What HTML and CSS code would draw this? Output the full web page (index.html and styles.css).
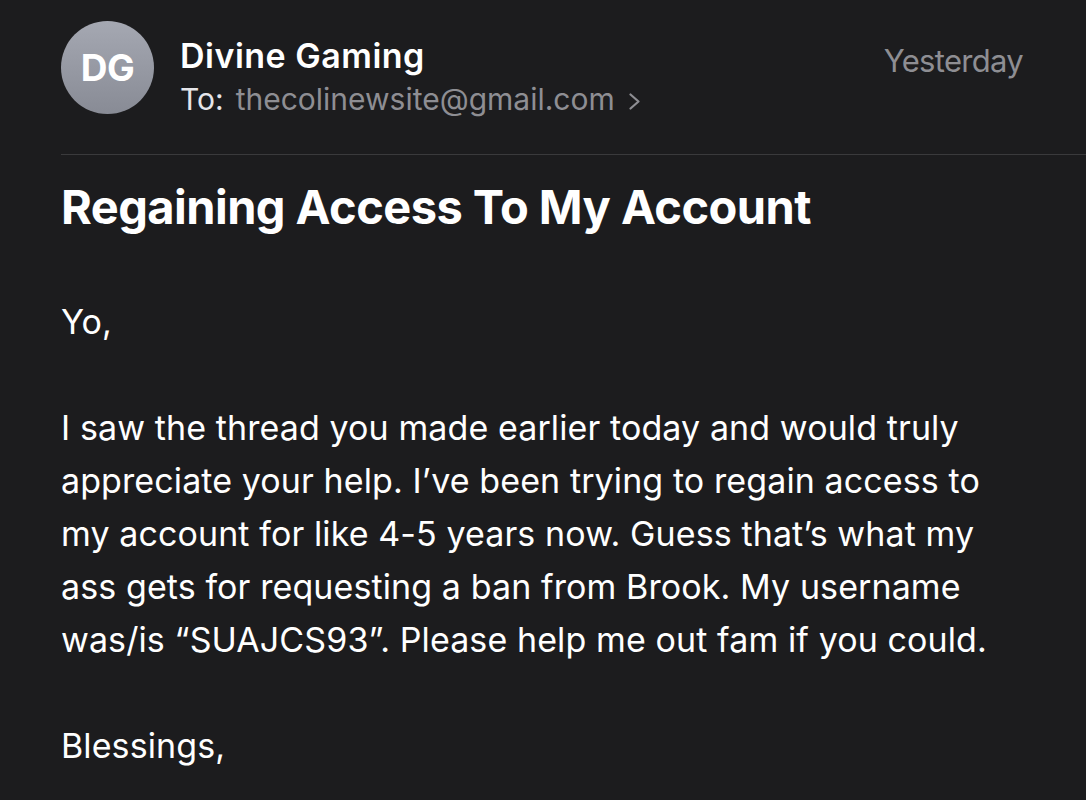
FILE: index.html
```html
<!DOCTYPE html>
<html>
<head>
<meta charset="utf-8">
<link rel="stylesheet" href="styles.css">
</head>
<body>
<div class="mail">
  <header class="head">
    <div class="avatar">DG</div>
    <div class="meta">
      <div class="name">Divine Gaming</div>
      <div class="to"><span class="to-label">To:</span><span class="addr">thecolinewsite@gmail.com</span>
        <svg class="chev" width="12" height="17" viewBox="0 0 12 17"><path d="M1.5 1.5 L9.5 8.5 L1.5 15.5" fill="none" stroke="#8e8e93" stroke-width="2.2" stroke-linecap="round" stroke-linejoin="round"/></svg>
      </div>
    </div>
    <div class="date">Yesterday</div>
  </header>
  <div class="sep"></div>
  <h1 class="subject">Regaining Access To My Account</h1>
  <div class="body">
    <p>Yo,</p>
    <p>I saw the thread you made earlier today and would truly<br>appreciate your help. I’ve been trying to regain access to<br>my account for like 4-5 years now. Guess that’s what my<br>ass gets for requesting a ban from Brook. My username<br>was/is “SUAJCS93”. Please help me out fam if you could.</p>
    <p>Blessings,</p>
  </div>
</div>
</body>
</html>
```

FILE: styles.css
```css
html, body {
  margin: 0;
  padding: 0;
  background: #1c1c1e;
}
body {
  font-family: Inter, "Noto Sans", sans-serif;
  color: #ffffff;
  width: 1086px;
  height: 800px;
  overflow: hidden;
}
.mail {
  padding-left: 61px;
}
.head {
  display: flex;
  align-items: flex-start;
  padding-top: 21px;
  padding-right: 63px;
  height: 154px;
  box-sizing: border-box;
}
.avatar {
  width: 93px;
  height: 93px;
  border-radius: 50%;
  background: linear-gradient(180deg, #a5a8b2 0%, #888b95 100%);
  color: #fff;
  font-weight: 700;
  font-size: 37px;
  letter-spacing: -0.5px;
  display: flex;
  align-items: center;
  justify-content: center;
  flex-shrink: 0;
}
.meta {
  margin-left: 26px;
  flex: 1;
  padding-top: 15px;
}
.name {
  font-size: 34px;
  font-weight: 600;
  line-height: 40px;
  letter-spacing: 0.5px;
}
.to {
  margin-top: 3px;
  font-size: 30px;
  line-height: 40px;
  color: #e5e5ea;
  display: flex;
  align-items: center;
}
.to-label {
  margin-right: 12px;
}
.addr {
  color: #8e8e93;
}
.chev {
  margin-left: 14px;
  margin-top: 5px;
}
.date {
  font-size: 31px;
  letter-spacing: -0.7px;
  color: #8e8e93;
  padding-top: 20px;
  line-height: 40px;
}
.sep {
  height: 1px;
  background: #3a3a3c;
}
.subject {
  margin: 0;
  padding-top: 24px;
  font-size: 47px;
  font-weight: 700;
  line-height: 56px;
  letter-spacing: -0.55px;
}
.body {
  margin-top: 60px;
  font-size: 34px;
  line-height: 53px;
  letter-spacing: 0.1px;
  white-space: nowrap;
}
.body p {
  margin: 0 0 53px 0;
}
```
